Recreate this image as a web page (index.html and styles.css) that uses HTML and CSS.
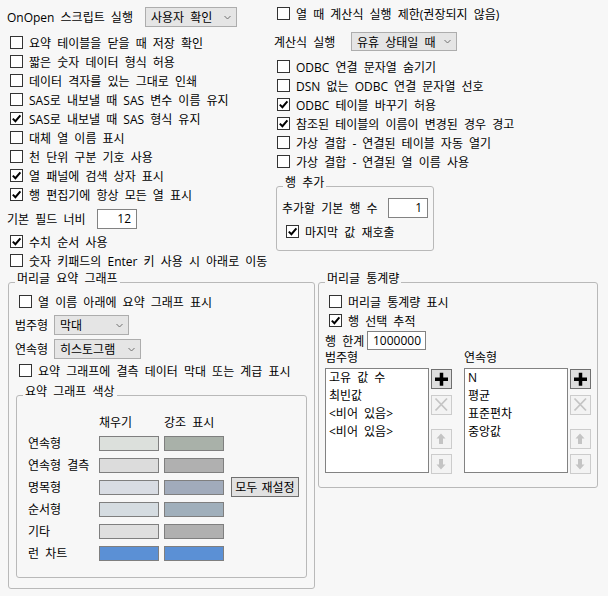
FILE: index.html
```html
<!DOCTYPE html>
<html lang="ko">
<head>
<meta charset="utf-8">
<title>Preferences</title>
<link rel="stylesheet" href="styles.css">
</head>
<body>
<div class="top">
  <div class="col-left">
    <div class="row sel-row">
      <span class="lbl w138">OnOpen 스크립트 실행</span>
      <div class="dd w92"><span>사용자 확인</span><svg class="chev" width="7" height="5" viewBox="0 0 7 5"><path d="M0.5 1 L3.5 4 L6.5 1" fill="none" stroke="#707070"/></svg></div>
    </div>
    <div class="mt6">
      <label class="cb"><span class="box"></span>요약 테이블을 닫을 때 저장 확인</label>
      <label class="cb"><span class="box"></span>짧은 숫자 데이터 형식 허용</label>
      <label class="cb"><span class="box"></span>데이터 격자를 있는 그대로 인쇄</label>
      <label class="cb"><span class="box"></span>SAS로 내보낼 때 SAS 변수 이름 유지</label>
      <label class="cb"><span class="box"><svg width="11" height="11" viewBox="0 0 11 11"><path d="M1.8 5.6 L4.4 8.2 L9.4 2.4" fill="none" stroke="#000" stroke-width="2"/></svg></span>SAS로 내보낼 때 SAS 형식 유지</label>
      <label class="cb"><span class="box"></span>대체 열 이름 표시</label>
      <label class="cb"><span class="box"></span>천 단위 구분 기호 사용</label>
      <label class="cb"><span class="box"><svg width="11" height="11" viewBox="0 0 11 11"><path d="M1.8 5.6 L4.4 8.2 L9.4 2.4" fill="none" stroke="#000" stroke-width="2"/></svg></span>열 패널에 검색 상자 표시</label>
      <label class="cb"><span class="box"><svg width="11" height="11" viewBox="0 0 11 11"><path d="M1.8 5.6 L4.4 8.2 L9.4 2.4" fill="none" stroke="#000" stroke-width="2"/></svg></span>행 편집기에 항상 모든 열 표시</label>
    </div>
    <div class="row field-row">
      <span class="lbl w90">기본 필드 너비</span>
      <div class="inp w40">12</div>
    </div>
    <div class="mt3">
      <label class="cb"><span class="box"><svg width="11" height="11" viewBox="0 0 11 11"><path d="M1.8 5.6 L4.4 8.2 L9.4 2.4" fill="none" stroke="#000" stroke-width="2"/></svg></span>수치 순서 사용</label>
      <label class="cb"><span class="box"></span>숫자 키패드의 Enter 키 사용 시 아래로 이동</label>
    </div>
  </div>

  <div class="col-right">
    <label class="cb"><span class="box"></span>열 때 계산식 실행 제한(권장되지 않음)</label>
    <div class="row calc-row">
      <span class="lbl w77">계산식 실행</span>
      <div class="dd w106"><span>유휴 상태일 때</span><svg class="chev" width="7" height="5" viewBox="0 0 7 5"><path d="M0.5 1 L3.5 4 L6.5 1" fill="none" stroke="#707070"/></svg></div>
    </div>
    <div class="mt6">
      <label class="cb"><span class="box"></span>ODBC 연결 문자열 숨기기</label>
      <label class="cb"><span class="box"></span>DSN 없는 ODBC 연결 문자열 선호</label>
      <label class="cb"><span class="box"><svg width="11" height="11" viewBox="0 0 11 11"><path d="M1.8 5.6 L4.4 8.2 L9.4 2.4" fill="none" stroke="#000" stroke-width="2"/></svg></span>ODBC 테이블 바꾸기 허용</label>
      <label class="cb"><span class="box"><svg width="11" height="11" viewBox="0 0 11 11"><path d="M1.8 5.6 L4.4 8.2 L9.4 2.4" fill="none" stroke="#000" stroke-width="2"/></svg></span>참조된 테이블의 이름이 변경된 경우 경고</label>
      <label class="cb"><span class="box"></span>가상 결합 - 연결된 테이블 자동 열기</label>
      <label class="cb"><span class="box"></span>가상 결합 - 연결된 열 이름 사용</label>
    </div>
    <div class="grp g-addrows">
      <div class="grp-title">행 추가</div>
      <div class="g-body add-body">
        <div class="row">
          <span class="lbl w106">추가할 기본 행 수</span>
          <div class="inp w40">1</div>
        </div>
        <label class="cb mt4"><span class="box"><svg width="11" height="11" viewBox="0 0 11 11"><path d="M1.8 5.6 L4.4 8.2 L9.4 2.4" fill="none" stroke="#000" stroke-width="2"/></svg></span>마지막 값 재호출</label>
      </div>
    </div>
  </div>
</div>

<div class="bottom">
  <div class="grp g-summary">
    <div class="grp-title">머리글 요약 그래프</div>
    <div class="g-body sum-body">
      <label class="cb"><span class="box"></span>열 이름 아래에 요약 그래프 표시</label>
      <div class="row dd-row mt4">
        <span class="lbl w39">범주형</span>
        <div class="dd w75"><span>막대</span><svg class="chev" width="7" height="5" viewBox="0 0 7 5"><path d="M0.5 1 L3.5 4 L6.5 1" fill="none" stroke="#707070"/></svg></div>
      </div>
      <div class="row dd-row mt4">
        <span class="lbl w39">연속형</span>
        <div class="dd w87"><span>히스토그램</span><svg class="chev" width="7" height="5" viewBox="0 0 7 5"><path d="M0.5 1 L3.5 4 L6.5 1" fill="none" stroke="#707070"/></svg></div>
      </div>
      <label class="cb mt2"><span class="box"></span>요약 그래프에 결측 데이터 막대 또는 계급 표시</label>

      <div class="grp g-colors">
        <div class="grp-title">요약 그래프 색상</div>
        <div class="color-grid">
          <span></span><span class="hd">채우기</span><span class="hd">강조 표시</span><span></span>
          <span>연속형</span><span class="sw c-cont-f"></span><span class="sw c-cont-h"></span><span></span>
          <span>연속형 결측</span><span class="sw c-miss-f"></span><span class="sw c-miss-h"></span><span></span>
          <span>명목형</span><span class="sw c-nom-f"></span><span class="sw c-nom-h"></span><button class="reset">모두 재설정</button>
          <span>순서형</span><span class="sw c-ord-f"></span><span class="sw c-ord-h"></span><span></span>
          <span>기타</span><span class="sw c-oth-f"></span><span class="sw c-oth-h"></span><span></span>
          <span>런 차트</span><span class="sw c-run"></span><span class="sw c-run"></span><span></span>
        </div>
      </div>
    </div>
  </div>

  <div class="grp g-stats">
    <div class="grp-title">머리글 통계량</div>
    <div class="g-body stats-body">
      <label class="cb"><span class="box"></span>머리글 통계량 표시</label>
      <label class="cb"><span class="box"><svg width="11" height="11" viewBox="0 0 11 11"><path d="M1.8 5.6 L4.4 8.2 L9.4 2.4" fill="none" stroke="#000" stroke-width="2"/></svg></span>행 선택 추적</label>
      <div class="row mt1">
        <span class="lbl w42">행 한계</span>
        <div class="inp w59 h19">1000000</div>
      </div>
      <div class="lists">
        <div class="lcol">
          <div class="lhead">범주형</div>
          <div class="lbox">
            <div>고유 값 수</div>
            <div>최빈값</div>
            <div>&lt;비어 있음&gt;</div>
            <div>&lt;비어 있음&gt;</div>
          </div>
        </div>
        <div class="bcol">
          <div class="ib on"><svg width="21" height="20" viewBox="0 0 21 20"><rect x="4" y="8.5" width="13" height="3.5" fill="#000"/><rect x="8.75" y="3.75" width="3.5" height="13" fill="#000"/></svg></div>
          <div class="ib x"><svg width="21" height="20" viewBox="0 0 21 20"><path d="M4.5 3.5 L16 15.5 M16 3.5 L4.5 15.5" stroke="#c4c4c4" stroke-width="1.8"/></svg></div>
          <div class="ib up"><svg width="21" height="20" viewBox="0 0 21 20"><path d="M10 4.5 L14.5 9.5 L12 9.5 L12 15 L8 15 L8 9.5 L5.5 9.5 Z" fill="#c4c4c4"/></svg></div>
          <div class="ib dn"><svg width="21" height="20" viewBox="0 0 21 20"><path d="M10 15.5 L14.5 10.5 L12 10.5 L12 5 L8 5 L8 10.5 L5.5 10.5 Z" fill="#c4c4c4"/></svg></div>
        </div>
        <div class="lcol ml12">
          <div class="lhead">연속형</div>
          <div class="lbox">
            <div>N</div>
            <div>평균</div>
            <div>표준편차</div>
            <div>중앙값</div>
          </div>
        </div>
        <div class="bcol">
          <div class="ib on"><svg width="21" height="20" viewBox="0 0 21 20"><rect x="4" y="8.5" width="13" height="3.5" fill="#000"/><rect x="8.75" y="3.75" width="3.5" height="13" fill="#000"/></svg></div>
          <div class="ib x"><svg width="21" height="20" viewBox="0 0 21 20"><path d="M4.5 3.5 L16 15.5 M16 3.5 L4.5 15.5" stroke="#c4c4c4" stroke-width="1.8"/></svg></div>
          <div class="ib up"><svg width="21" height="20" viewBox="0 0 21 20"><path d="M10 4.5 L14.5 9.5 L12 9.5 L12 15 L8 15 L8 9.5 L5.5 9.5 Z" fill="#c4c4c4"/></svg></div>
          <div class="ib dn"><svg width="21" height="20" viewBox="0 0 21 20"><path d="M10 15.5 L14.5 10.5 L12 10.5 L12 5 L8 5 L8 10.5 L5.5 10.5 Z" fill="#c4c4c4"/></svg></div>
        </div>
      </div>
    </div>
  </div>
</div>
</body>
</html>
```

FILE: styles.css
```css
* { box-sizing: border-box; }
html, body { margin: 0; padding: 0; }
body {
  width: 608px;
  height: 596px;
  overflow: hidden;
  background: #f7f7f7;
  color: #000;
  font-family: "Open Sans", "Noto Sans CJK KR", sans-serif;
  font-size: 12px;
  word-spacing: 3px;
}

.top {
  display: grid;
  grid-template-columns: 267px 1fr;
  align-items: start;
  padding: 7px 0 0 7px;
}

.row { display: flex; align-items: center; }
.lbl { white-space: nowrap; flex: none; }

.w138 { width: 138px; }
.w90 { width: 90px; }
.w77 { width: 77px; }
.w106 { width: 106px; }
.w39 { width: 39px; }
.w42 { width: 42px; }

.mt1 { margin-top: 1px; }
.mt2 { margin-top: 2px; }
.mt3 { margin-top: 3px; }
.mt4 { margin-top: 4px; }
.mt6 { margin-top: 6px; }
.ml12 { margin-left: 12px; }

.sel-row { height: 20px; }

/* dropdowns */
.dd {
  display: flex;
  align-items: center;
  justify-content: space-between;
  height: 20px;
  border: 1px solid #adadad;
  background: #e5e5e5;
  padding: 0 5px 0 5px;
  white-space: nowrap;
  flex: none;
}
.dd.w92 { width: 92px; }
.dd.w106 { width: 106px; height: 19px; }
.dd.w75 { width: 75px; }
.dd.w87 { width: 87px; }
.chev { flex: none; }

/* checkboxes */
.cb {
  display: flex;
  align-items: center;
  height: 19px;
  white-space: nowrap;
}
.box {
  flex: none;
  width: 13px;
  height: 13px;
  border: 1px solid #333;
  background: #fff;
  margin: 0 6px 0 3px;
  display: flex;
  align-items: center;
  justify-content: center;
}
.box svg { display: block; }
.grp .box { margin-left: 4px; }

/* text inputs */
.inp {
  flex: none;
  height: 20px;
  border: 1px solid #828282;
  background: #fff;
  text-align: right;
  padding-right: 5px;
  line-height: 18px;
}
.inp.w40 { width: 40px; }
.inp.w59 { width: 59px; }
.inp.h19 { height: 19px; line-height: 17px; padding-right: 4px; }

.field-row { margin-top: 5px; height: 20px; }

.col-right { margin-top: -3px; }
.calc-row { margin-top: 9px; height: 19px; }

/* group boxes */
.grp {
  border: 1px solid #b9b9b9;
  border-radius: 3px;
}
.grp-title {
  width: max-content;
  margin: -11px 0 0 6px;
  padding: 0 2px;
  line-height: 14px;
  background: #f7f7f7;
  white-space: nowrap;
}
.g-body { padding-left: 5px; }

.g-addrows {
  margin: 15px 0 0 2px;
  width: 158px;
}
.add-body { padding-top: 8px; padding-bottom: 9px; }
.add-body .row { height: 20px; }

.bottom {
  display: flex;
  align-items: flex-start;
  gap: 3px;
  padding-left: 8px;
  margin-top: 12px;
}

.g-summary { width: 307px; }
.sum-body { padding: 6px 0 10px 6px; }
.dd-row { height: 20px; }

.g-colors {
  margin: 15px 7px 0 1px;
}
.color-grid {
  display: grid;
  grid-template-columns: 66px 60px 60px auto;
  grid-template-rows: 20px repeat(6, 22px);
  column-gap: 5px;
  align-items: center;
  padding: 13px 0 13px 11px;
  white-space: nowrap;
}
.sw {
  width: 60px;
  height: 15px;
  border: 1px solid #7f7f7f;
}
.c-cont-f { background: #dce0dc; }
.c-cont-h { background: #a9b1a9; }
.c-miss-f { background: #dcdcdc; }
.c-miss-h { background: #b0b0b0; }
.c-nom-f { background: #d8dce3; }
.c-nom-h { background: #a1abbb; }
.c-ord-f { background: #d5dce1; }
.c-ord-h { background: #a0afbb; }
.c-oth-f { background: #dfdfdf; }
.c-oth-h { background: #b0b0b0; }
.c-run { background: #5b90d5; }

.reset {
  margin-left: 2px;
  height: 20px;
  width: 68px;
  padding: 0;
  border: 1px solid #707070;
  background: #e1e1e1;
  font: inherit;
  word-spacing: 1px;
  color: #000;
  white-space: nowrap;
}

.g-stats { width: 280px; }
.stats-body { padding: 6px 0 13px 6px; }
.stats-body .row { height: 19px; }

.lists { display: flex; align-items: flex-start; }
.lcol { width: 104px; flex: none; }
.lhead { height: 18px; line-height: 16px; white-space: nowrap; }
.lbox {
  height: 105px;
  border: 1px solid #828282;
  background: #fff;
  padding-left: 3px;
  line-height: 18px;
  white-space: nowrap;
}
.bcol {
  flex: none;
  width: 21px;
  margin-left: 2px;
  padding-top: 19px;
  display: flex;
  flex-direction: column;
}
.ib {
  width: 21px;
  height: 20px;
  border: 1px solid #cccccc;
  background: #f3f3f3;
  position: relative;
}
.ib svg { display: block; margin: -1px 0 0 -1px; }
.ib.on { border-color: #6f6f6f; background: #dedede; }
.ib.x { margin-top: 6px; }
.ib.up { margin-top: 14px; }
.ib.dn { margin-top: 5px; }
```
